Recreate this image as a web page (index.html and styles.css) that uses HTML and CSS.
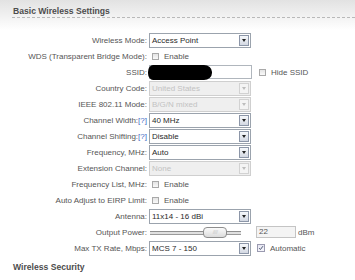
FILE: index.html
```html
<!DOCTYPE html>
<html lang="en">
<head>
    <meta charset="UTF-8">
    <title>Basic Wireless Settings</title>
    <link rel="stylesheet" href="styles.css">
</head>
<body>
    <div class="page">
        <h2 class="section-title">Basic Wireless Settings</h2>

        <div class="form">
            <div class="row">
                <label>Wireless Mode:</label>
                <div class="field">
                    <div class="select"><span>Access Point</span><i class="arrow"></i></div>
                </div>
            </div>
            <div class="row">
                <label>WDS (Transparent Bridge Mode):</label>
                <div class="field">
                    <span class="check"></span><span class="check-text">Enable</span>
                </div>
            </div>
            <div class="row">
                <label>SSID:</label>
                <div class="field">
                    <div class="input ssid"><span class="redact"></span></div>
                    <span class="check hide-ssid"></span><span class="check-text">Hide SSID</span>
                </div>
            </div>
            <div class="row">
                <label>Country Code:</label>
                <div class="field">
                    <div class="select disabled"><span>United States</span><i class="arrow"></i></div>
                </div>
            </div>
            <div class="row">
                <label>IEEE 802.11 Mode:</label>
                <div class="field">
                    <div class="select disabled"><span>B/G/N mixed</span><i class="arrow"></i></div>
                </div>
            </div>
            <div class="row">
                <label>Channel Width:<a class="help">[?]</a></label>
                <div class="field">
                    <div class="select"><span>40 MHz</span><i class="arrow"></i></div>
                </div>
            </div>
            <div class="row">
                <label>Channel Shifting:<a class="help">[?]</a></label>
                <div class="field">
                    <div class="select"><span>Disable</span><i class="arrow"></i></div>
                </div>
            </div>
            <div class="row">
                <label>Frequency, MHz:</label>
                <div class="field">
                    <div class="select"><span>Auto</span><i class="arrow"></i></div>
                </div>
            </div>
            <div class="row">
                <label>Extension Channel:</label>
                <div class="field">
                    <div class="select disabled"><span>None</span><i class="arrow"></i></div>
                </div>
            </div>
            <div class="row">
                <label>Frequency List, MHz:</label>
                <div class="field">
                    <span class="check"></span><span class="check-text">Enable</span>
                </div>
            </div>
            <div class="row">
                <label>Auto Adjust to EIRP Limit:</label>
                <div class="field">
                    <span class="check"></span><span class="check-text">Enable</span>
                </div>
            </div>
            <div class="row">
                <label>Antenna:</label>
                <div class="field">
                    <div class="select"><span>11x14 - 16 dBi</span><i class="arrow"></i></div>
                </div>
            </div>
            <div class="row">
                <label>Output Power:</label>
                <div class="field">
                    <div class="slider">
                        <div class="track"></div>
                        <div class="thumb">////</div>
                    </div>
                    <div class="input power">22</div>
                    <span class="unit">dBm</span>
                </div>
            </div>
            <div class="row">
                <label>Max TX Rate, Mbps:</label>
                <div class="field">
                    <div class="select"><span>MCS 7 - 150</span><i class="arrow"></i></div>
                    <span class="check checked auto">
                        <svg viewBox="0 0 8 8"><path d="M1.5 4.2 L3.2 6 L6.6 1.6" fill="none" stroke="#4a5570" stroke-width="1.3"/></svg>
                    </span>
                    <span class="check-text">Automatic</span>
                </div>
            </div>
        </div>

        <h2 class="section-title security">Wireless Security</h2>
    </div>
</body>
</html>
```

FILE: styles.css
```css
* {
    margin: 0;
    padding: 0;
    box-sizing: border-box;
}

body {
    font-family: "Liberation Sans", Arial, sans-serif;
    font-size: 8px;
    color: #555;
    background: #fff linear-gradient(#e2e2e2, #fff 30px) no-repeat;
    min-height: 280px;
}

.page {
    padding-left: 12px;
}

.section-title {
    font-size: 8.6px;
    font-weight: bold;
    color: #4d4d4d;
    line-height: 10px;
    padding: 6px 0 1px 1px;
    border-bottom: 1px dashed #b9b9b9;
}

.section-title.security {
    margin-top: 0;
    border-bottom-color: transparent;
}

.form {
    margin-top: 14px;
}

.row {
    display: grid;
    grid-template-columns: 135px 1fr;
    column-gap: 2px;
    height: 16px;
    align-items: center;
}

.row label {
    text-align: right;
    white-space: nowrap;
}

.help {
    color: #3a68c4;
}

.field {
    display: flex;
    align-items: center;
    white-space: nowrap;
}

/* dropdowns */
.select {
    width: 102px;
    height: 15px;
    border: 1px solid #9ba3ad;
    background: #fff;
    display: flex;
    align-items: center;
    justify-content: space-between;
    padding: 0 1px 0 2px;
    color: #2a2a2a;
}

.arrow {
    width: 10px;
    height: 11px;
    border: 1px solid #8c96a8;
    background: linear-gradient(#f6f8fb, #d3d8e2);
    position: relative;
}

.arrow::after {
    content: "";
    position: absolute;
    left: 2px;
    top: 3px;
    border-left: 2.5px solid transparent;
    border-right: 2.5px solid transparent;
    border-top: 3px solid #222;
}

.select.disabled {
    background: #efefef;
    border-color: #cfcfcf;
    color: #c2c2c2;
}

.select.disabled .arrow {
    border-color: #d2d2d2;
    background: #f4f4f4;
}

.select.disabled .arrow::after {
    border-top-color: #bdbdbd;
}

/* checkboxes */
.check {
    width: 7px;
    height: 7px;
    margin-left: 3px;
    border: 1px solid #a9a9a9;
    background: linear-gradient(#e4e4e4, #fafafa);
    flex: none;
}

.check.checked {
    width: 8px;
    height: 8px;
    background: linear-gradient(#e6e6f2, #f6f6fb);
    border-color: #9a9ab0;
}

.check svg {
    display: block;
    width: 100%;
    height: 100%;
}

.check-text {
    margin-left: 5px;
}

.hide-ssid {
    margin-left: 7px;
}

.auto {
    margin-left: 6px;
}

/* text inputs */
.input {
    border: 1px solid #b0b6bd;
    background: #fff;
    color: #555;
}

.ssid {
    width: 103px;
    height: 14px;
    position: relative;
}

.redact {
    position: absolute;
    left: -2px;
    top: -1px;
    width: 64px;
    height: 15px;
    background: #000;
    border-radius: 5px 8px 8px 5px / 7px;
}

.power {
    width: 40px;
    height: 12px;
    margin-left: 15px;
    padding-left: 2px;
    line-height: 10px;
    background: #f4f4f4;
    border-color: #c4c4c4;
}

.unit {
    margin-left: 2px;
}

/* slider */
.slider {
    width: 91px;
    height: 11px;
    margin-left: 1px;
    position: relative;
}

.track {
    position: absolute;
    left: 0;
    right: 0;
    top: 4px;
    height: 4px;
    border-top: 1px solid #8f8f8f;
    border-bottom: 1px solid #9a9a9a;
    background: #e0e0e0;
}

.thumb {
    position: absolute;
    left: 53px;
    top: 0;
    width: 24px;
    height: 11px;
    border: 1px solid #8e8e8e;
    border-radius: 4px;
    background: linear-gradient(#fbfbfb, #dcdcdc);
    color: #c8c8c8;
    font-size: 6px;
    line-height: 9px;
    text-align: center;
    letter-spacing: -0.5px;
}
```
